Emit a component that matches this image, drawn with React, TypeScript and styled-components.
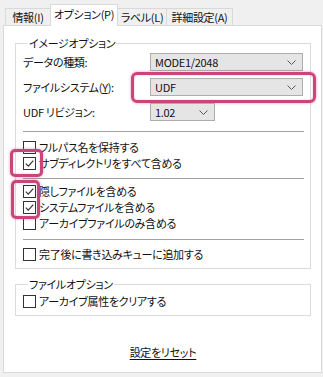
import styled, { createGlobalStyle } from "styled-components";

const GlobalStyle = createGlobalStyle`
  html, body {
    margin: 0;
    padding: 0;
    background: #f0f0f0;
  }
  body {
    font-family: "Noto Sans CJK JP", "Noto Sans", sans-serif;
    font-size: 11px;
    font-feature-settings: "palt";
    letter-spacing: -0.3px;
    color: #111;
  }
`;

const Window = styled.div`
  width: 323px;
  height: 377px;
  padding-top: 4px;
  box-sizing: border-box;
  overflow: hidden;
`;

const TabStrip = styled.div`
  display: flex;
  align-items: flex-end;
  height: 22px;
  padding-left: 5px;
  position: relative;
  z-index: 1;
`;

const Tab = styled.div<{ $w: number; $active?: boolean }>`
  width: ${({ $w }) => $w}px;
  height: ${({ $active }) => ($active ? 22 : 17)}px;
  margin-bottom: ${({ $active }) => ($active ? 0 : 1)}px;
  box-sizing: border-box;
  border: 1px solid #d9d9d9;
  border-bottom: none;
  background: ${({ $active }) => ($active ? "#fff" : "#f0f0f0")};
  display: flex;
  align-items: center;
  justify-content: center;
  padding-bottom: ${({ $active }) => ($active ? 3 : 0)}px;
  white-space: nowrap;

  & + & {
    margin-left: -1px;
  }
`;

const Panel = styled.div`
  margin: -1px 0 0 3px;
  width: 319px;
  height: 348px;
  box-sizing: border-box;
  border: 1px solid #d9d9d9;
  background: #fff;
  padding: 10px 10px 0 11px;
`;

const Group = styled.fieldset<{ $gap?: number }>`
  margin: ${({ $gap }) => $gap || 0}px 0 0;
  padding: 0 6px 6px 7px;
  border: 1px solid #dcdcdc;
  min-width: 0;
`;

const Legend = styled.legend`
  margin-left: 5px;
  padding: 0 1px;
  line-height: 14px;
`;

const FieldRows = styled.div`
  display: flex;
  flex-direction: column;
  gap: 1px;
`;

const FieldRow = styled.div`
  position: relative;
  display: flex;
  align-items: center;
  height: 24px;
`;

const FieldLabel = styled.span`
  width: 127px;
  white-space: nowrap;
`;

const Select = styled.div<{ $w: number }>`
  width: ${({ $w }) => $w}px;
  height: 18px;
  box-sizing: border-box;
  border: 1px solid #adadad;
  background: #e5e5e5;
  display: flex;
  align-items: center;
  justify-content: space-between;
  padding: 0 6px 0 4px;
`;

const Rule = styled.div<{ $top: number; $bottom: number }>`
  height: 1px;
  background: #a0a0a0;
  margin: ${({ $top, $bottom }) => `${$top}px 0 ${$bottom}px`};
`;

const CheckRow = styled.label`
  display: flex;
  align-items: center;
  height: 16px;
  white-space: nowrap;
`;

const Box = styled.span`
  width: 13px;
  height: 13px;
  box-sizing: border-box;
  border: 1px solid #333;
  background: #fff;
  margin-right: 3px;
  display: flex;
  align-items: center;
  justify-content: center;
  flex-shrink: 0;
`;

const Marked = styled.div`
  position: relative;
`;

const Highlight = styled.div<{ $x: number; $y: number; $w: number; $h: number; $r?: number }>`
  position: absolute;
  left: ${({ $x }) => $x}px;
  top: ${({ $y }) => $y}px;
  width: ${({ $w }) => $w}px;
  height: ${({ $h }) => $h}px;
  box-sizing: border-box;
  border: 3px solid #c9467a;
  border-radius: ${({ $r }) => $r || 5}px;
  box-shadow: 0 0 3px rgba(201, 70, 122, 0.55), inset 0 0 2px rgba(201, 70, 122, 0.4);
  pointer-events: none;
`;

const Inset = styled.div`
  padding-top: 2px;
`;

const Reset = styled.div`
  margin-top: 28px;
  text-align: center;
  line-height: 16px;

  span {
    text-decoration: underline;
    text-underline-offset: 2px;
  }
`;

const Chevron = () => (
  <svg width="9" height="5" viewBox="0 0 9 5">
    <polyline points="0.5,0.5 4.5,4.5 8.5,0.5" fill="none" stroke="#5a5a5a" strokeWidth="1" />
  </svg>
);

const Check = ({ label, checked }: { label: string; checked?: boolean }) => (
  <CheckRow>
    <Box>
      {checked && (
        <svg width="11" height="11" viewBox="0 0 11 11">
          <polyline points="1.8,5.6 4.3,8.1 9.3,2.6" fill="none" stroke="#333" strokeWidth="1.2" />
        </svg>
      )}
    </Box>
    {label}
  </CheckRow>
);

export default function App() {
  return (
    <Window>
      <GlobalStyle />
      <TabStrip>
        <Tab $w={46}>情報(I)</Tab>
        <Tab $w={68} $active>
          オプション(P)
        </Tab>
        <Tab $w={50}>ラベル(L)</Tab>
        <Tab $w={67}>詳細設定(A)</Tab>
      </TabStrip>
      <Panel>
        <Group>
          <Legend>イメージオプション</Legend>
          <FieldRows>
            <FieldRow>
              <FieldLabel>データの種類:</FieldLabel>
              <Select $w={153}>
                MODE1/2048
                <Chevron />
              </Select>
            </FieldRow>
            <FieldRow>
              <FieldLabel>
                ファイルシステム(<u>Y</u>):
              </FieldLabel>
              <Select $w={153}>
                UDF
                <Chevron />
              </Select>
              <Highlight $x={108} $y={-3} $w={185} $h={31} $r={6} />
            </FieldRow>
            <FieldRow>
              <FieldLabel>UDF リビジョン:</FieldLabel>
              <Select $w={65}>
                1.02
                <Chevron />
              </Select>
            </FieldRow>
          </FieldRows>
          <Rule $top={7} $bottom={7} />
          <Check label="フルパス名を保持する" />
          <Marked>
            <Check label="サブディレクトリをすべて含める" checked />
            <Highlight $x={-13} $y={-6} $w={33} $h={28} />
          </Marked>
          <Rule $top={7} $bottom={4} />
          <Marked>
            <Check label="隠しファイルを含める" checked />
            <Check label="システムファイルを含める" checked />
            <Highlight $x={-12} $y={-3} $w={29} $h={39} />
          </Marked>
          <Check label="アーカイブファイルのみ含める" />
          <Rule $top={8} $bottom={6} />
          <Check label="完了後に書き込みキューに追加する" />
        </Group>
        <Group $gap={8}>
          <Legend>ファイルオプション</Legend>
          <Inset>
            <Check label="アーカイブ属性をクリアする" />
          </Inset>
        </Group>
        <Reset>
          <span>設定をリセット</span>
        </Reset>
      </Panel>
    </Window>
  );
}
